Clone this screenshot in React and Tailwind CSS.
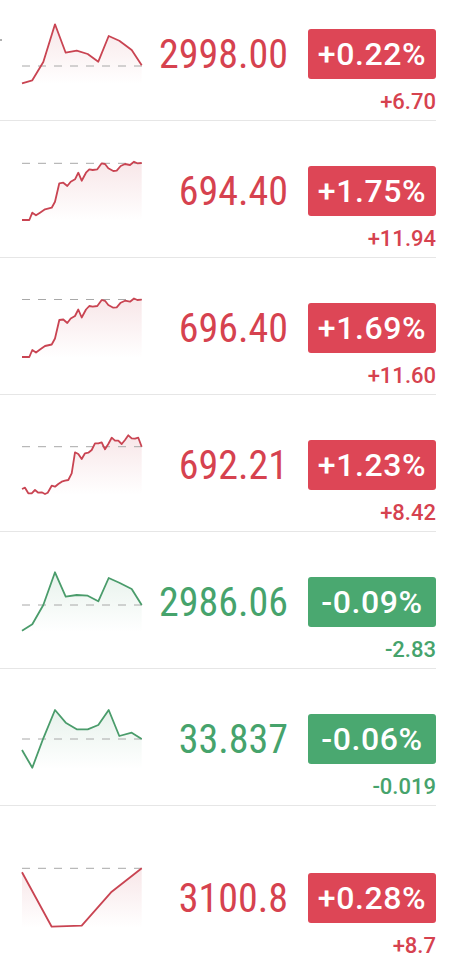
import React from "react";

const RED = "#d6424f";
const GREEN = "#46a36c";

const chart2 = {
  xs: [0, 7.3, 10.3, 14, 18, 23, 29.7, 33, 37.3, 41.3, 45.3, 48.7, 53, 56.3, 59.7, 64, 67.3, 70.7, 75.3, 79.7, 83, 86.3, 91.3, 94.7, 98.7, 103, 108, 112, 115.3, 119.7],
  ys: [59, 59, 51.7, 54.3, 51.7, 48.3, 46.7, 40.7, 22.3, 21.7, 25, 20.7, 18.3, 11.7, 19.7, 11.7, 8.3, 9, 8.3, 2.3, 3, 7.3, 10, 9.7, 5, 3, 4, 0.7, 2.3, 2],
};

const rows = [
  {
    up: true,
    price: "2998.00",
    pct: "+0.22%",
    chg: "+6.70",
    base: 42,
    xs: [0, 10.3, 21.3, 33, 43.7, 54.7, 65.7, 76.3, 86.7, 97.3, 109.7, 119.7],
    ys: [59.3, 56.3, 38, 0.3, 28.7, 26.7, 30, 37.7, 12, 16.7, 26, 41.3],
  },
  { up: true, price: "694.40", pct: "+1.75%", chg: "+11.94", base: 2.3, ...chart2 },
  {
    up: true,
    price: "696.40",
    pct: "+1.69%",
    chg: "+11.60",
    base: 1.5,
    xs: chart2.xs,
    ys: [59, 59, 52, 54.5, 51.5, 48, 46.5, 40.5, 22, 21.5, 25, 20.5, 18, 11.5, 19.5, 11.5, 8, 8.7, 8, 2, 2.8, 7, 9.7, 9.3, 4.7, 2.7, 3.7, 0.5, 2, 1.7],
  },
  {
    up: true,
    price: "692.21",
    pct: "+1.23%",
    chg: "+8.42",
    base: 11.7,
    xs: [0, 3, 6.3, 9.7, 13, 16.3, 19.7, 23, 25.7, 29.7, 33, 36.3, 39.7, 43, 46.3, 49.7, 53, 56.3, 59.7, 63, 66.3, 69.7, 73, 76.3, 79.7, 83, 86.3, 89.7, 93, 96.3, 99.7, 103, 106.3, 109.7, 113, 116.3, 119.7],
    ys: [54, 52.7, 58.3, 58.3, 55, 57.7, 57.3, 59, 57.7, 50.7, 51.7, 49, 46.7, 45.7, 45, 38.3, 17.3, 19, 24, 18.3, 17.7, 15, 8.3, 8.3, 7.3, 14.3, 9, 2.7, 5.7, 5.7, 9, 5, 0.3, 3.3, 3.7, 2.7, 11.7],
  },
  {
    up: false,
    price: "2986.06",
    pct: "-0.09%",
    chg: "-2.83",
    base: 33,
    xs: [0, 10.3, 21.3, 33, 43.7, 54.7, 65.7, 76.3, 86.7, 97.3, 109.7, 119.7],
    ys: [58.7, 52.3, 33, 0.3, 24.7, 23, 23.7, 29.3, 6, 10.7, 17, 33],
  },
  {
    up: false,
    price: "33.837",
    pct: "-0.06%",
    chg: "-0.019",
    base: 30,
    xs: [0, 10.3, 21.3, 33, 43.7, 54.7, 65.7, 76.3, 86.7, 97.3, 109.7, 119.7],
    ys: [41, 58.7, 29.3, 1, 13.7, 20.3, 20.3, 16, 1, 27, 23.7, 30],
  },
  {
    up: true,
    last: true,
    price: "3100.8",
    pct: "+0.28%",
    chg: "+8.7",
    base: 0.3,
    xs: [0, 29.7, 59.7, 89.7, 119.7],
    ys: [4.3, 58.7, 57.7, 23.7, 0.3],
  },
];

function Sparkline({ xs, ys, base, up, id }) {
  const color = up ? "#c94452" : "#4a9c6b";
  const line = xs.map((x, i) => `${i ? "L" : "M"}${x},${ys[i]}`).join(" ");
  const area = `${line} L${xs[xs.length - 1]},60 L${xs[0]},60 Z`;
  return (
    <svg width="120" height="60" viewBox="0 0 120 60" className="overflow-visible shrink-0">
      <defs>
        <linearGradient id={id} x1="0" y1="0" x2="0" y2="1">
          <stop offset="0%" stopColor={color} stopOpacity="0.13" />
          <stop offset="100%" stopColor={color} stopOpacity="0" />
        </linearGradient>
      </defs>
      <path d={area} fill={`url(#${id})`} />
      <line x1="0" y1={base} x2="120" y2={base} stroke="#a8a8a8" strokeWidth="1" strokeDasharray="8 8" />
      <path d={line} fill="none" stroke={color} strokeWidth="1.8" strokeLinejoin="round" />
    </svg>
  );
}

export default function App() {
  return (
    <div className="relative w-[468px] h-[973px] bg-white overflow-hidden font-['Roboto',sans-serif]">
      <div className="absolute left-0 top-[39px] w-[2px] h-[2px] bg-[#b0b0b0]" />
      <div className="-mt-[16px]">
        {rows.map((r, i) => (
          <div
            key={i}
            className={
              r.last
                ? "w-[436px] pt-[62px] pl-[22px]"
                : "w-[436px] h-[137px] border-b border-[#e6e6e6] pt-[40px] pl-[22px]"
            }
          >
            <div className="flex items-center h-[60px]">
              <Sparkline {...r} id={`g${i}`} />
              <div
                className="flex-1 text-right text-[40px] leading-none font-normal [font-stretch:76%] mt-[2px]"
                style={{ color: r.up ? RED : GREEN }}
              >
                {r.price}
              </div>
              <div
                className="ml-[20px] w-[128px] h-[50px] rounded-[3px] text-white text-[32px] leading-none font-medium tracking-[0.6px] flex items-center justify-center"
                style={{ background: r.up ? "#dd4656" : "#4aa870" }}
              >
                {r.pct}
              </div>
            </div>
            <div
              className="mt-[7px] text-right text-[22px] leading-none font-medium"
              style={{ color: r.up ? RED : GREEN }}
            >
              {r.chg}
            </div>
          </div>
        ))}
      </div>
    </div>
  );
}
